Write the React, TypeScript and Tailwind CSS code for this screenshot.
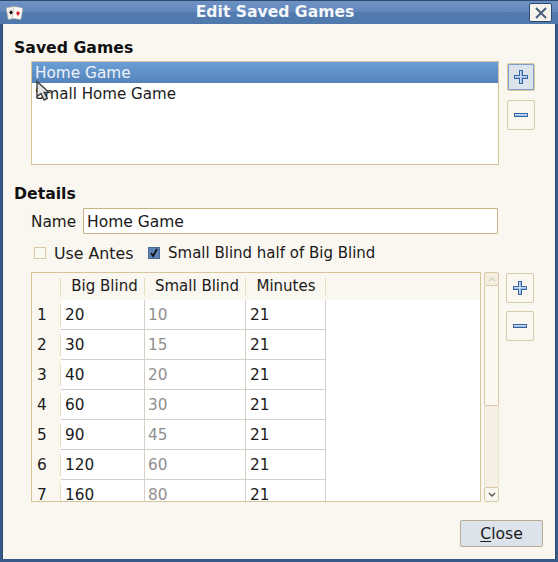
const rows = [
  [1, 20, 10, 21],
  [2, 30, 15, 21],
  [3, 40, 20, 21],
  [4, 60, 30, 21],
  [5, 90, 45, 21],
  [6, 120, 60, 21],
  [7, 160, 80, 21],
];

function Plus() {
  return (
    <svg width="14" height="14" viewBox="0 0 14 14" shapeRendering="crispEdges">
      <path d="M5.5 .5h3v5h5v3h-5v5h-3v-5h-5v-3h5z" fill="#9dbde3" stroke="#3465a4" />
      <path d="M6 1h1v12h-1zM1 6h12v1h-12z" fill="#c5d8ef" />
    </svg>
  );
}

function Minus() {
  return (
    <svg width="14" height="5" viewBox="0 0 14 5" shapeRendering="crispEdges">
      <rect x=".5" y=".5" width="13" height="3" fill="#9dbde3" stroke="#3465a4" />
      <rect x="1" y="1" width="12" height="1" fill="#c5d8ef" />
    </svg>
  );
}

function IconButton({ kind, active, h }: { kind: "plus" | "minus"; active?: boolean; h: string }) {
  const base = "w-[28px] flex items-center justify-center rounded-[2px] border " + h;
  return (
    <div className={base + (active ? " border-[#d8c9a0] bg-[#dde3ea] shadow-[inset_0_0_0_1px_#7f9fc8]" : " border-[#d8cba8] bg-[#faf7f0]")}>
      {kind === "plus" ? <Plus /> : <Minus />}
    </div>
  );
}

function HeaderCell({ w, children }: { w: string; children?: React.ReactNode }) {
  return (
    <div className={"h-full flex items-center justify-center text-[15px] relative " + w}>
      {children}
      <div className="absolute right-0 top-[5px] bottom-[5px] w-px bg-[#e8dcc0]" />
    </div>
  );
}

export default function App() {
  return (
    <div
      className="relative w-[558px] h-[562px] flex flex-col bg-[#365a88] text-[15px] text-[#1a1a1a] overflow-hidden"
      style={{ fontFamily: '"DejaVu Sans", sans-serif' }}
    >
      {/* Title bar */}
      <div className="h-[24px] shrink-0 flex items-center relative bg-[linear-gradient(#6f92c4_0%,#6187bb_50%,#527cb0_50%,#4f79ad_100%)] border-t border-[#2c4a70]">
        <svg className="absolute left-[6px] top-[3px]" width="18" height="18" viewBox="0 0 18 18">
          <rect x="1" y="3" width="9" height="12" rx="1" fill="#f4f1ea" stroke="#9a9a9a" strokeWidth=".5" transform="rotate(-10 5 9)" />
          <rect x="7" y="3" width="9" height="12" rx="1" fill="#fbf9f4" stroke="#9a9a9a" strokeWidth=".5" transform="rotate(10 11 9)" />
          <path d="M5 6l2 3h-4z" fill="#111" />
          <circle cx="5" cy="9" r="1.2" fill="#111" />
          <path d="M12 7l2 2-2 3-2-3z" fill="#d3212a" />
        </svg>
        <div className="flex-1 text-center font-bold text-[15.6px] text-[#f4f6fa] pr-[8px]">Edit Saved Games</div>
        <div className="absolute right-[6px] top-[2px] w-[23px] h-[19px] bg-[#f6f3ec] border border-[#2c4a70] rounded-[2px] flex items-center justify-center">
          <svg width="12" height="12" viewBox="0 0 12 12">
            <path d="M1 1l10 10M11 1L1 11" stroke="#4a5f7c" strokeWidth="2" />
          </svg>
        </div>
      </div>

      {/* Body */}
      <div className="mx-[2px] mb-[3px] flex-1 bg-[#faf7f0] border-l border-r border-[#2c4a70] pl-[11px] pr-[15px] flex flex-col">
        <div className="font-bold text-[15.7px] leading-[18px] mt-[15px] text-[#111]">Saved Games</div>

        <div className="flex mt-[4px] ml-[17px] gap-[8px]">
          <div className="w-[468px] h-[104px] border border-[#d8c69a] bg-white text-[15.1px]">
            <div className="h-[21px] leading-[23px] pl-[3px] text-[#eef3fa] bg-[linear-gradient(#6a9fd6,#5583ba)] text-[15.3px]">Home Game</div>
            <div className="h-[21px] leading-[23px] pl-[3px]">Small Home Game</div>
          </div>
          <div className="flex flex-col gap-[9px] mt-[2px]">
            <IconButton kind="plus" active h="h-[28px]" />
            <IconButton kind="minus" h="h-[30px]" />
          </div>
        </div>

        <div className="font-bold text-[15.7px] leading-[18px] mt-[20px] text-[#111]">Details</div>

        <div className="flex items-center mt-[5px] ml-[17px] gap-[7px]">
          <span className="w-[45px] pt-[2px] text-[15.3px]">Name</span>
          <div className="w-[415px] h-[26px] border border-[#c8b582] rounded-[1px] bg-white leading-[26px] pl-[3px] text-[15.5px]">Home Game</div>
        </div>

        <div className="flex items-center mt-[7px] ml-[20px] h-[24px]">
          <span className="w-[12px] h-[12px] border border-[#d8c9a4] bg-[#fbf9f3]" />
          <span className="ml-[8px] w-[94px] pt-[1px] text-[15.8px]">Use Antes</span>
          <span className="w-[12px] h-[12px] border border-[#4a6a94] bg-[#5d85b8] flex items-center justify-center">
            <svg width="10" height="10" viewBox="0 0 10 10">
              <path d="M2 5l2.2 3L8 1" fill="none" stroke="#111" strokeWidth="1.8" />
            </svg>
          </span>
          <span className="ml-[8px] pt-[1px]">Small Blind half of Big Blind</span>
        </div>

        <div className="flex mt-[7px] ml-[17px]">
          <div className="w-[450px] h-[230px] border border-[#d8c69a] overflow-hidden bg-white">
            <div className="h-[27px] flex bg-[#faf7f0] w-full">
              <HeaderCell w="w-[29px]" />
              <HeaderCell w="w-[84px] pl-[3px]">Big Blind</HeaderCell>
              <HeaderCell w="w-[101px] pl-[3px]">Small Blind</HeaderCell>
              <HeaderCell w="w-[80px]">Minutes</HeaderCell>
            </div>
            {rows.map((r) => (
              <div key={r[0]} className="flex h-[30px] leading-[30px] text-[15.3px]">
                <div className="w-[29px] shrink-0 bg-[#faf7f0] pl-[5px] relative">
                  {r[0]}
                  <div className="absolute right-0 top-[4px] bottom-[4px] w-px bg-[#e8dcc0]" />
                </div>
                <div className="w-[84px] shrink-0 pl-[4px] border-r border-b border-[#d4d0c8]">{r[1]}</div>
                <div className="w-[101px] shrink-0 pl-[3px] text-[#8f8f8f] border-r border-b border-[#d4d0c8]">{r[2]}</div>
                <div className="w-[80px] shrink-0 pl-[4px] border-r border-b border-[#d4d0c8]">{r[3]}</div>
              </div>
            ))}
          </div>

          <div className="ml-[3px] w-[15px] h-[230px] flex flex-col">
            <div className="h-[14px] border border-[#d8c9a4] rounded-[2px] bg-[#f3eee0] flex items-center justify-center">
              <svg width="8" height="5" viewBox="0 0 8 5"><path d="M1 4l3-3 3 3" fill="none" stroke="#d8d2c0" strokeWidth="1.4" /></svg>
            </div>
            <div className="h-[120px] border border-t-0 border-[#d8c9a4] rounded-b-[2px] bg-[#faf7f0]" />
            <div className="flex-1 bg-[#f5f0e3] border-x border-[#ebe2cc]" />
            <div className="h-[15px] border border-[#d8c9a4] rounded-[2px] bg-[#faf7f0] flex items-center justify-center">
              <svg width="8" height="5" viewBox="0 0 8 5"><path d="M1 1l3 3 3-3" fill="none" stroke="#555" strokeWidth="1.4" /></svg>
            </div>
          </div>

          <div className="flex flex-col gap-[8px] ml-[7px] mt-[1px]">
            <IconButton kind="plus" h="h-[30px]" />
            <IconButton kind="minus" h="h-[30px]" />
          </div>
        </div>

        <div className="flex justify-end mt-[18px] -mr-[3px]">
          <div className="w-[83px] h-[27px] border border-[#b5aa90] rounded-[2px] bg-[#dde3ea] flex items-center justify-center text-[15.6px] pt-[2px]">
            <span><span className="underline underline-offset-2">C</span>lose</span>
          </div>
        </div>
      </div>

      {/* Mouse pointer */}
      <svg className="absolute left-[35px] top-[80px]" width="18" height="24" viewBox="0 0 18 24">
        <path d="M2 1.5v15l4-3 3.2 6.5 3-1.5-3-6h5z" fill="#e4e4e4" stroke="#3c3c3c" strokeWidth="1.4" />
      </svg>
    </div>
  );
}
